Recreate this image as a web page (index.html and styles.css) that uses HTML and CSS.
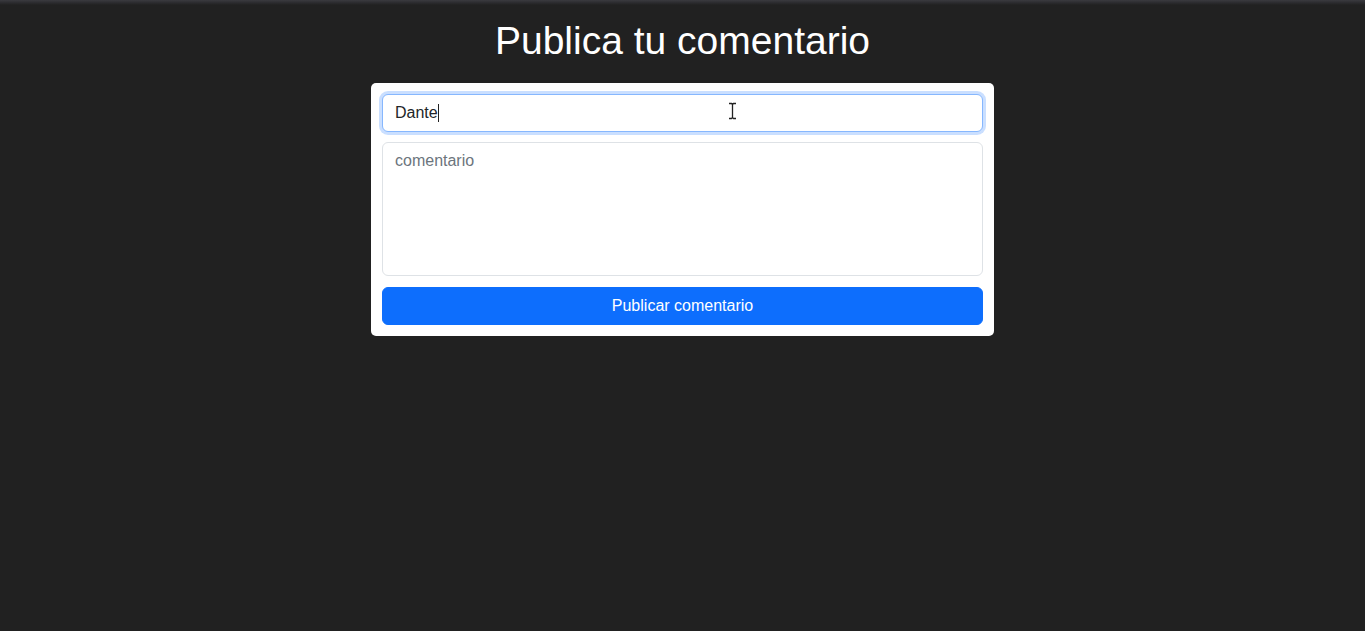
FILE: index.html
```html
<!DOCTYPE html>
<html lang="es">
<head>
<meta charset="utf-8">
<title>Publica tu comentario</title>
<link rel="stylesheet" href="styles.css">
</head>
<body>
<main class="page">
  <h1 class="title">Publica tu comentario</h1>
  <form class="card">
    <div class="field-wrap">
      <input class="field field-focus" type="text" value="Dante">
      <span class="caret"></span>
      <svg class="ibeam" width="9" height="18" viewBox="0 0 9 18"><path d="M1 1.5h2.5l1 1 1-1H8M4.5 2.5v13M1 16.5h2.5l1-1 1 1H8" fill="none" stroke="#222" stroke-width="1.3"/></svg>
    </div>
    <textarea class="field area" placeholder="comentario"></textarea>
    <button class="btn" type="button">Publicar comentario</button>
  </form>
</main>
</body>
</html>
```

FILE: styles.css
```css
* { box-sizing: border-box; }
html, body { margin: 0; height: 100%; }
body {
  background: linear-gradient(#3a3a3f 0, #2a2a2d 3px, #212121 5px, #212121 100%);
  font-family: "Liberation Sans", Arial, sans-serif;
  color: #212529;
}
.page {
  display: flex;
  flex-direction: column;
  align-items: center;
}
.title {
  margin: 17px 0 18px;
  font-size: 39px;
  line-height: 48px;
  font-weight: 400;
  color: #ffffff;
}
.card {
  width: 623px;
  background: #fff;
  border-radius: 5px;
  padding: 11px;
  display: flex;
  flex-direction: column;
}
.field-wrap { position: relative; }
.field {
  display: block;
  width: 100%;
  font-family: "Liberation Sans", Arial, sans-serif;
  font-size: 16px;
  line-height: 24px;
  color: #212529;
  background: #fff;
  border: 1px solid #dee2e6;
  border-radius: 6px;
  padding: 6px 12px;
  outline: none;
}
.field-focus {
  height: 38px;
  border-color: #86b7fe;
  box-shadow: 0 0 0 3px rgba(13, 110, 253, 0.22);
}
.caret {
  position: absolute;
  left: 56px;
  top: 10px;
  width: 1px;
  height: 18px;
  background: #222;
}
.ibeam {
  position: absolute;
  left: 346px;
  top: 8px;
}
.area {
  margin-top: 10px;
  height: 134px;
  resize: none;
}
.area::placeholder { color: #6c757d; }
.btn {
  margin-top: 11px;
  height: 38px;
  width: 100%;
  border: 1px solid #0d6efd;
  border-radius: 6px;
  background: #0d6efd;
  color: #fff;
  font-family: "Liberation Sans", Arial, sans-serif;
  font-size: 16px;
  line-height: 24px;
  padding: 6px 12px;
}
```
